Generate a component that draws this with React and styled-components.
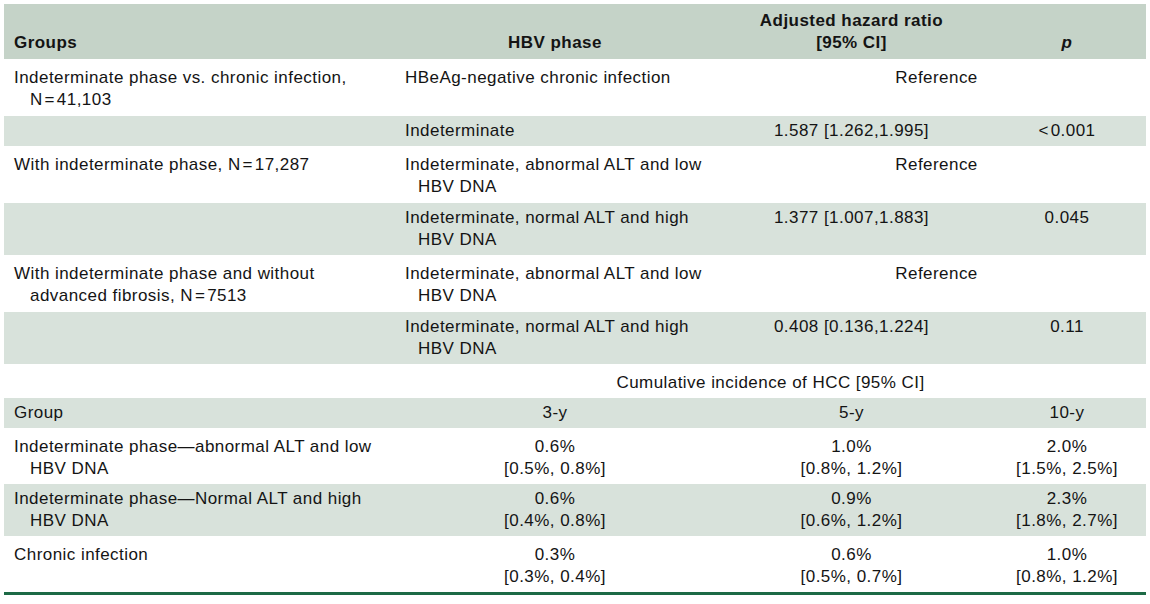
import React from 'react'
import styled, { createGlobalStyle } from 'styled-components'

const GlobalStyle = createGlobalStyle`
  body {
    margin: 0;
    background: #ffffff;
    font-family: "Liberation Sans", Arial, sans-serif;
    color: #141414;
  }
`

const Page = styled.div`
  padding: 4px;
`

const Table = styled.table`
  width: 1142px;
  border-collapse: collapse;
  table-layout: fixed;
  font-size: 17px;
  line-height: 22px;
  letter-spacing: 0.45px;
  border-bottom: 3px solid #1d6a46;
`

const HeadRow = styled.tr`
  background: #c5d3c8;
`

const HeadCell = styled.th`
  padding: 6px 10px 5px;
  vertical-align: bottom;
  font-weight: bold;
  font-style: ${p => (p.$italic ? 'italic' : 'normal')};
  text-align: ${p => p.$align || 'left'};
`

const Row = styled.tr`
  background: ${p => (p.$shaded ? '#d8e2db' : '#ffffff')};

  & > td {
    padding-top: ${p => (p.$shaded ? '4px' : '8px')};
    padding-bottom: ${p => (p.$shaded ? '4px' : p.$tight ? '4px' : '5px')};
  }
`

const Cell = styled.td`
  padding-left: ${p => (p.$hang ? 10 + p.$hang : p.$padLeft || 10)}px;
  padding-right: 10px;
  text-indent: ${p => (p.$hang ? -p.$hang : 0)}px;
  vertical-align: top;
  white-space: nowrap;
  text-align: ${p => p.$align || 'left'};
`

const hazardRows = [
  {
    group: ['Indeterminate phase vs. chronic infection,', 'N\u200a=\u200a41,103'],
    rows: [
      { phase: ['HBeAg-negative chronic infection'], ratio: null },
      { phase: ['Indeterminate'], ratio: '1.587 [1.262,1.995]', p: '<\u200a0.001' },
    ],
  },
  {
    group: ['With indeterminate phase, N\u200a=\u200a17,287'],
    rows: [
      { phase: ['Indeterminate, abnormal ALT and low', 'HBV DNA'], ratio: null },
      { phase: ['Indeterminate, normal ALT and high', 'HBV DNA'], ratio: '1.377 [1.007,1.883]', p: '0.045' },
    ],
  },
  {
    group: ['With indeterminate phase and without', 'advanced fibrosis, N\u200a=\u200a7513'],
    rows: [
      { phase: ['Indeterminate, abnormal ALT and low', 'HBV DNA'], ratio: null },
      { phase: ['Indeterminate, normal ALT and high', 'HBV DNA'], ratio: '0.408 [0.136,1.224]', p: '0.11' },
    ],
  },
]

const incidenceRows = [
  {
    group: ['Indeterminate phase\u2014abnormal ALT and low', 'HBV DNA'],
    values: [['0.6%', '[0.5%, 0.8%]'], ['1.0%', '[0.8%, 1.2%]'], ['2.0%', '[1.5%, 2.5%]']],
  },
  {
    group: ['Indeterminate phase\u2014Normal ALT and high', 'HBV DNA'],
    values: [['0.6%', '[0.4%, 0.8%]'], ['0.9%', '[0.6%, 1.2%]'], ['2.3%', '[1.8%, 2.7%]']],
  },
  {
    group: ['Chronic infection'],
    values: [['0.3%', '[0.3%, 0.4%]'], ['0.6%', '[0.5%, 0.7%]'], ['1.0%', '[0.8%, 1.2%]']],
  },
]

function Lines({ lines }) {
  return lines.map((line, i) => (
    <React.Fragment key={i}>
      {i > 0 && <br />}
      {line}
    </React.Fragment>
  ))
}

export default function App() {
  return (
    <Page>
      <GlobalStyle />
      <Table>
        <colgroup>
          <col style={{ width: 391 }} />
          <col style={{ width: 320 }} />
          <col style={{ width: 273 }} />
          <col style={{ width: 158 }} />
        </colgroup>
        <thead>
          <HeadRow>
            <HeadCell>Groups</HeadCell>
            <HeadCell $align="center">HBV phase</HeadCell>
            <HeadCell $align="center">
              Adjusted hazard ratio
              <br />
              [95% CI]
            </HeadCell>
            <HeadCell $align="center" $italic>p</HeadCell>
          </HeadRow>
        </thead>
        <tbody>
          {hazardRows.map((block, b) =>
            block.rows.map((r, i) => (
              <Row key={`${b}-${i}`} $shaded={i === 1}>
                <Cell $hang={i === 0 ? 16 : 0}>
                  {i === 0 && <Lines lines={block.group} />}
                </Cell>
                <Cell $hang={13}>
                  <Lines lines={r.phase} />
                </Cell>
                {r.ratio ? (
                  <>
                    <Cell $align="center">{r.ratio}</Cell>
                    <Cell $align="center">{r.p}</Cell>
                  </>
                ) : (
                  <Cell $align="center" $padLeft={22} colSpan={2}>
                    Reference
                  </Cell>
                )}
              </Row>
            ))
          )}
          <Row $tight>
            <Cell />
            <Cell $align="center" colSpan={3}>
              Cumulative incidence of HCC [95% CI]
            </Cell>
          </Row>
          <Row $shaded>
            <Cell>Group</Cell>
            <Cell $align="center">3-y</Cell>
            <Cell $align="center">5-y</Cell>
            <Cell $align="center">10-y</Cell>
          </Row>
          {incidenceRows.map((r, i) => (
            <Row key={i} $shaded={i === 1} $tight={i !== 1}>
              <Cell $hang={16}>
                <Lines lines={r.group} />
              </Cell>
              {r.values.map((v, j) => (
                <Cell key={j} $align="center">
                  <Lines lines={v} />
                </Cell>
              ))}
            </Row>
          ))}
        </tbody>
      </Table>
    </Page>
  )
}
